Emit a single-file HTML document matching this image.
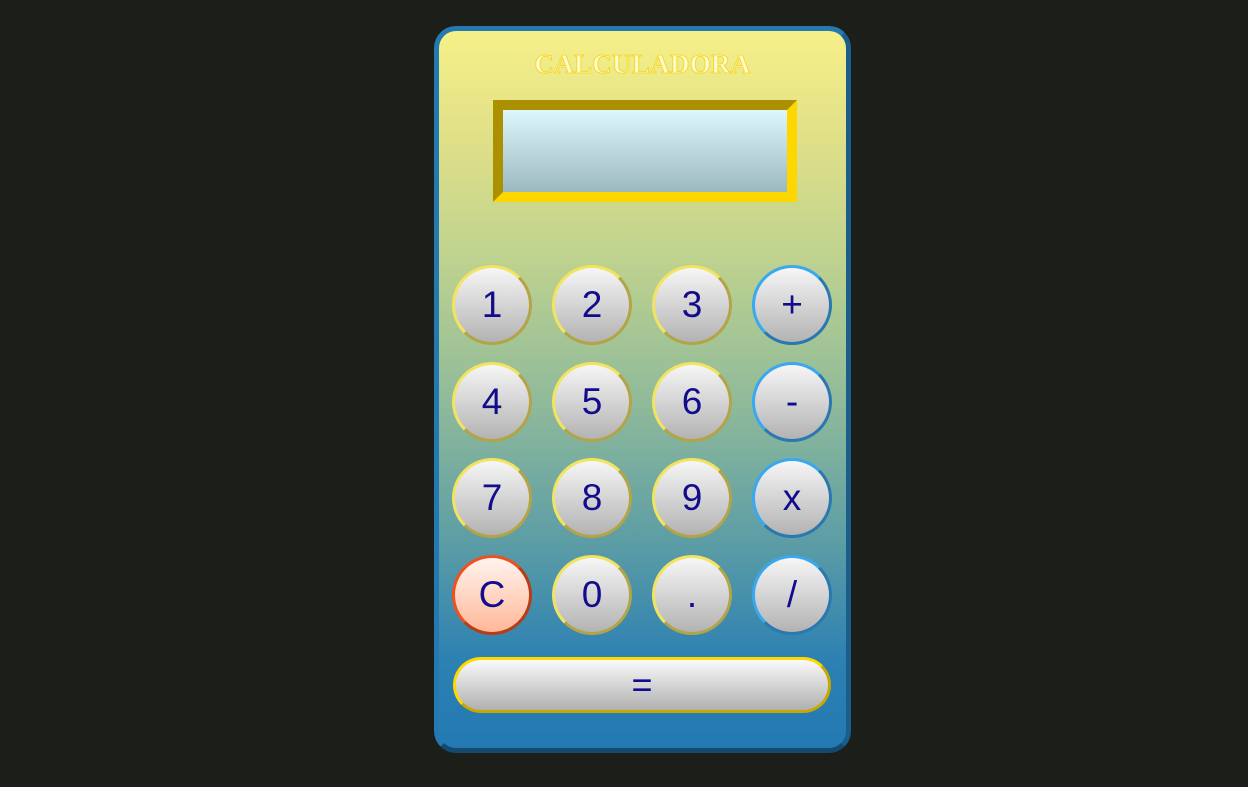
<!DOCTYPE html>
<html><head><style>
html,body{margin:0;padding:0;width:1248px;height:787px;background:#1b1e19;overflow:hidden}
.calc{position:absolute;left:434px;top:26px;width:407px;height:717px;border:5px solid;border-color:#2379b0 #1a5f8c #144a6e #2379b0;border-radius:22px;background:linear-gradient(#f6f088 0%,#e0e088 15%,#bed28f 32%,#8fba9a 52%,#5a9ca6 72%,#2c80b2 88%,#237ab2 100%)}
.title{position:absolute;left:0;right:0;top:18px;text-align:center;font:bold 27px "Liberation Serif",serif;color:#fffbd0;-webkit-text-stroke:1px #f5d830;letter-spacing:0.3px}
.disp{position:absolute;left:54px;top:69px;width:284px;height:82px;border:10px solid;border-color:#ab9000 #ffd700 #ffd700 #ab9000;background:linear-gradient(#dcf8fc,#9db9c0)}
.b{position:absolute;width:74px;height:74px;border-radius:50%;border:3px solid;border-color:#f2e460 #b3a448 #b3a448 #f2e460;background:linear-gradient(#f6f6f6,#b3b3b3);font:37px "Liberation Sans",sans-serif;color:#120c8c;text-align:center;line-height:74px}
.op{border-color:#3aa8ee #2a78b0 #2a78b0 #3aa8ee}
.c{border-color:#f05020 #b83c14 #b83c14 #f05020;background:linear-gradient(#fff4ee,#ffb898)}
.eq{position:absolute;left:14px;top:626px;width:372px;height:50px;border-radius:28px;border:3px solid;border-color:#ffd800 #c8a800 #c8a800 #ffd800;background:linear-gradient(#fafafa,#b0b0b0);font:36px "Liberation Sans",sans-serif;color:#120c8c;text-align:center;line-height:50px}
</style></head><body>
<div class="calc">
<div class="title">CALCULADORA</div>
<div class="disp"></div>
<div class="b" style="left:13px;top:234px">1</div>
<div class="b" style="left:113px;top:234px">2</div>
<div class="b" style="left:213px;top:234px">3</div>
<div class="b op" style="left:313px;top:234px">+</div>
<div class="b" style="left:13px;top:331px">4</div>
<div class="b" style="left:113px;top:331px">5</div>
<div class="b" style="left:213px;top:331px">6</div>
<div class="b op" style="left:313px;top:331px">-</div>
<div class="b" style="left:13px;top:427px">7</div>
<div class="b" style="left:113px;top:427px">8</div>
<div class="b" style="left:213px;top:427px">9</div>
<div class="b op" style="left:313px;top:427px">x</div>
<div class="b c" style="left:13px;top:524px">C</div>
<div class="b" style="left:113px;top:524px">0</div>
<div class="b" style="left:213px;top:524px">.</div>
<div class="b op" style="left:313px;top:524px">/</div>
<div class="eq">=</div>
</div>
</body></html>
